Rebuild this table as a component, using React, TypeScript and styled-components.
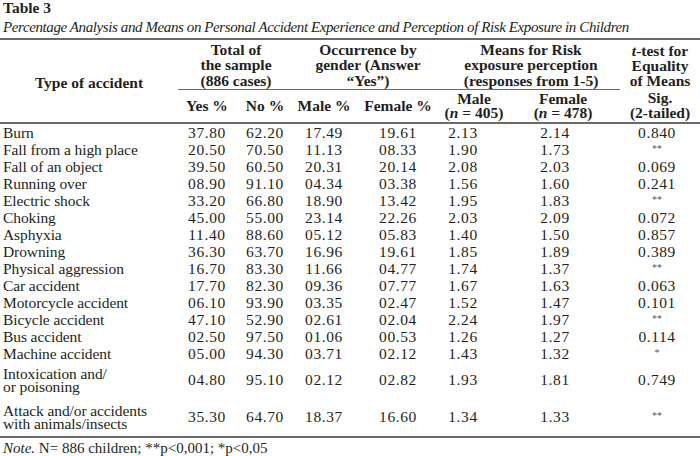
import * as React from 'react';
import styled, { createGlobalStyle } from 'styled-components';

const ink = '#231f20';
const rule = '#6a6a6a';

const GlobalStyle = createGlobalStyle`
  html, body {
    margin: 0;
    padding: 0;
    background: #ffffff;
  }
  body {
    font-family: "Liberation Serif", "Times New Roman", serif;
    color: ${ink};
  }
`;

const Page = styled.div`
  width: 700px;
  height: 456px;
  overflow: hidden;
`;

const Title = styled.h1`
  margin: 0;
  padding: 0 0 0 3px;
  height: 17px;
  font-size: 15.5px;
  line-height: 16px;
  font-weight: bold;
`;

const Caption = styled.p`
  margin: 0;
  padding: 1px 0 0 3px;
  height: 20px;
  font-size: 15px;
  line-height: 19px;
  font-style: italic;
  letter-spacing: -0.4px;
  white-space: nowrap;
`;

const Table = styled.table`
  width: 700px;
  border-collapse: collapse;
  table-layout: fixed;
  border-top: 2px solid ${rule};
  border-bottom: 2px solid ${rule};
`;

const GroupHead = styled.th<{ $spanner?: boolean }>`
  height: 46px;
  padding: 2px 0 1px;
  font-size: 15.5px;
  line-height: 15.3px;
  font-weight: bold;
  text-align: center;
  vertical-align: bottom;
  border-bottom: ${(p) => (p.$spanner ? `1px solid ${rule}` : 'none')};
`;

const TypeHead = styled.th`
  padding: 2px 0 0;
  font-size: 15.5px;
  line-height: 17px;
  font-weight: bold;
  text-align: center;
  vertical-align: middle;
  border-bottom: 2px solid ${rule};
`;

const SubHead = styled.th`
  height: 32px;
  padding: 0;
  font-size: 15.5px;
  line-height: 14.5px;
  font-weight: bold;
  text-align: center;
  vertical-align: middle;
  border-bottom: 2px solid ${rule};
`;

const Cell = styled.td<{ $label?: boolean; $tall?: boolean; $shift?: number }>`
  height: ${(p) => (p.$tall ? 37 : 17)}px;
  padding: 0 ${(p) => p.$shift ?? 0}px 0 ${(p) => (p.$label ? 3 : 0)}px;
  font-size: 15.5px;
  line-height: ${(p) => (p.$tall ? 12.5 : 17)}px;
  text-align: ${(p) => (p.$label ? 'left' : 'center')};
  letter-spacing: ${(p) => (p.$label ? -0.1 : 0.6)}px;
  vertical-align: middle;
  white-space: pre;
`;

const Stars = styled.span`
  font-size: 10px;
  line-height: 0;
  color: #555;
  vertical-align: 3px;
  letter-spacing: 0;
`;

const Note = styled.p`
  margin: 0;
  padding: 1px 0 0 3px;
  font-size: 15px;
  line-height: 18px;
`;

const Em = styled.i`
  font-style: italic;
`;

const columns = [178, 58, 58, 60, 88, 64, 114, 80];
// extra right padding nudges the means columns left, as in the print
const shifts = [0, 0, 0, 0, 0, 22, 16, 6];

type Row = [string, string, string, string, string, string, string, string];

const rows: Row[] = [
  ['Burn', '37.80', '62.20', '17.49', '19.61', '2.13', '2.14', '0.840'],
  ['Fall from a high place', '20.50', '70.50', '11.13', '08.33', '1.90', '1.73', '**'],
  ['Fall of an object', '39.50', '60.50', '20.31', '20.14', '2.08', '2.03', '0.069'],
  ['Running over', '08.90', '91.10', '04.34', '03.38', '1.56', '1.60', '0.241'],
  ['Electric shock', '33.20', '66.80', '18.90', '13.42', '1.95', '1.83', '**'],
  ['Choking', '45.00', '55.00', '23.14', '22.26', '2.03', '2.09', '0.072'],
  ['Asphyxia', '11.40', '88.60', '05.12', '05.83', '1.40', '1.50', '0.857'],
  ['Drowning', '36.30', '63.70', '16.96', '19.61', '1.85', '1.89', '0.389'],
  ['Physical aggression', '16.70', '83.30', '11.66', '04.77', '1.74', '1.37', '**'],
  ['Car accident', '17.70', '82.30', '09.36', '07.77', '1.67', '1.63', '0.063'],
  ['Motorcycle accident', '06.10', '93.90', '03.35', '02.47', '1.52', '1.47', '0.101'],
  ['Bicycle accident', '47.10', '52.90', '02.61', '02.04', '2.24', '1.97', '**'],
  ['Bus accident', '02.50', '97.50', '01.06', '00.53', '1.26', '1.27', '0.114'],
  ['Machine accident', '05.00', '94.30', '03.71', '02.12', '1.43', '1.32', '*'],
  ['Intoxication and/\nor poisoning', '04.80', '95.10', '02.12', '02.82', '1.93', '1.81', '0.749'],
  ['Attack and/or accidents\nwith animals/insects', '35.30', '64.70', '18.37', '16.60', '1.34', '1.33', '**'],
];

const App = () => (
  <Page>
    <GlobalStyle />
    <Title>Table 3</Title>
    <Caption>
      Percentage Analysis and Means on Personal Accident Experience and Perception of Risk Exposure in Children
    </Caption>
    <Table>
      <colgroup>
        {columns.map((w, i) => (
          <col key={i} style={{ width: w }} />
        ))}
      </colgroup>
      <thead>
        <tr>
          <TypeHead rowSpan={2}>Type of accident</TypeHead>
          <GroupHead colSpan={2} $spanner>
            Total of
            <br />
            the sample
            <br />
            (886 cases)
          </GroupHead>
          <GroupHead colSpan={2} $spanner>
            Occurrence by
            <br />
            gender (Answer
            <br />
            “Yes”)
          </GroupHead>
          <GroupHead colSpan={2} $spanner>
            Means for Risk
            <br />
            exposure perception
            <br />
            (responses from 1-5)
          </GroupHead>
          <GroupHead>
            <Em>t</Em>-test for
            <br />
            Equality
            <br />
            of Means
          </GroupHead>
        </tr>
        <tr>
          <SubHead>Yes %</SubHead>
          <SubHead>No %</SubHead>
          <SubHead>Male %</SubHead>
          <SubHead>Female %</SubHead>
          <SubHead>
            Male
            <br />(<Em>n</Em> = 405)
          </SubHead>
          <SubHead>
            Female
            <br />(<Em>n</Em> = 478)
          </SubHead>
          <SubHead>
            Sig.
            <br />
            (2-tailed)
          </SubHead>
        </tr>
      </thead>
      <tbody>
        {rows.map((row) => {
          const tall = row[0].includes('\n');
          return (
            <tr key={row[0]}>
              {row.map((value, i) => (
                <Cell key={i} $label={i === 0} $tall={tall} $shift={shifts[i]}>
                  {value.startsWith('*') ? <Stars>{value}</Stars> : value}
                </Cell>
              ))}
            </tr>
          );
        })}
      </tbody>
    </Table>
    <Note>
      <Em>Note.</Em> N= 886 children; **p&lt;0,001; *p&lt;0,05
    </Note>
  </Page>
);

export default App;
